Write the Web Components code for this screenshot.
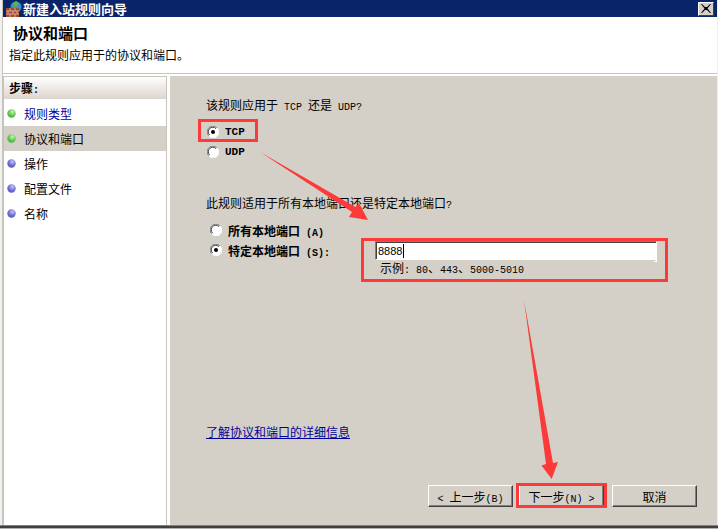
<!DOCTYPE html>
<html lang="zh">
<head>
<meta charset="utf-8">
<title>新建入站规则向导</title>
<style>
  html, body { margin: 0; padding: 0; height: 100%; overflow: hidden; background: #d4d0c8; }
  body { font: 12px "Noto Sans CJK SC", "Liberation Sans", sans-serif; color: #000; }
</style>
</head>
<body>
<wizard-window>
  <wizard-titlebar slot="title">新建入站规则向导</wizard-titlebar>
  <wizard-header slot="header" heading="协议和端口">指定此规则应用于的协议和端口。</wizard-header>
  <step-list slot="steps">
    <step-item state="done" link>规则类型</step-item>
    <step-item state="done" current>协议和端口</step-item>
    <step-item>操作</step-item>
    <step-item>配置文件</step-item>
    <step-item>名称</step-item>
  </step-list>
  <protocol-page slot="page"></protocol-page>
</wizard-window>

<script>
const UI_FONT = '"Noto Sans CJK SC", "Liberation Sans", sans-serif';
// latin text in the shot is 6px a character, Liberation Mono at 10px gives the same
const MONO = "10px 'Liberation Mono', monospace";

// outer frame: title, header and the two columns under it
class WizardWindow extends HTMLElement {
    constructor() {
        super();
        this.attachShadow({ mode: 'open' });
        this.shadowRoot.innerHTML = `
      <style>
        :host { display: block; width: 718px; height: 529px; box-sizing: border-box; padding: 0 1px 0 2px; background: #f0f0f0; }
        .frame { display: flex; flex-direction: column; height: 100%; border-left: 1px solid #c8c4bc; }
        .body { flex: 1; min-height: 0; display: grid; grid-template-columns: 164px 1fr; column-gap: 3px; padding-top: 2px; background: #fff; }
        .edge { height: 4px; margin-left: -3px; margin-right: -1px; background: linear-gradient(#808080 0 25%, #404040 25% 75%, #b0b0b0 75%); }
      </style>
      <div class="frame">
        <slot name="title"></slot>
        <slot name="header"></slot>
        <div class="body">
          <slot name="steps"></slot>
          <slot name="page"></slot>
        </div>
        <div class="edge"></div>
      </div>
    `;
    }
}

class WizardTitlebar extends HTMLElement {
    constructor() {
        super();
        this.attachShadow({ mode: 'open' });
        this.shadowRoot.innerHTML = `
      <style>
        :host { display: flex; align-items: center; height: 17px; padding-left: 3px; background: #0a246a; color: #fff; font: bold 13px ${UI_FONT}; }
        svg.logo { width: 16px; height: 16px; margin-right: 1px; flex: none; }
        .text { flex: 1; line-height: 17px; }
        .close { width: 16px; height: 14px; box-sizing: border-box; background: #d4d0c8; border: 1px solid; border-color: #fff #404040 #404040 #fff; display: flex; align-items: center; justify-content: center; margin-right: 3px; }
        .close svg { width: 10px; height: 9px; }
      </style>
      <svg class="logo" viewBox="0 0 16 16">
        <circle cx="10" cy="6" r="5.5" fill="#2f8fd8"/>
        <path d="M7 2l3-2 3 2-2 3-3 1z" fill="#58b83c"/>
        <rect x="0" y="7" width="13" height="9" fill="#a04a30"/>
        <path d="M0 10h13M0 13h13M4 7v3M9 7v3M2 10v3M7 10v3M11 10v3M4 13v3M9 13v3" stroke="#d8a890" stroke-width="1" fill="none"/>
      </svg>
      <span class="text"><slot></slot></span>
      <span class="close"><svg viewBox="0 0 10 9"><path d="M1 0l3 3h2l3-3h1L6.5 4.5 10 9H9L6 6H4L1 9H0l3.5-4.5L0 0z" fill="#000"/></svg></span>
    `;
    }
}

class WizardHeader extends HTMLElement {
    constructor() {
        super();
        this.attachShadow({ mode: 'open' });
        this.shadowRoot.innerHTML = `
      <style>
        :host { display: block; height: 57px; box-sizing: border-box; padding: 6px 0 0 6px; background: #fff; border-bottom: 1px solid #c8c4bc; }
        h1 { margin: 0 0 0 4px; font: bold 15px/19px ${UI_FONT}; }
        p { margin: 5px 0 0 0; font: 12px/16px ${UI_FONT}; }
      </style>
      <h1>${this.getAttribute('heading') || ''}</h1>
      <p><slot></slot></p>
    `;
    }
}

class StepList extends HTMLElement {
    constructor() {
        super();
        this.attachShadow({ mode: 'open' });
        this.shadowRoot.innerHTML = `
      <style>
        :host { display: block; background: #fff; border: 1px solid #c8c4bc; border-bottom: 0; box-sizing: border-box; }
        .label { height: 22px; padding-left: 5px; font: bold 12px/21px ${UI_FONT}; background: linear-gradient(#ffffff, #f2efec 35%, #dcd6d0); }
        .label span { font: bold ${MONO}; }
        .items { display: flex; flex-direction: column; padding-top: 2px; }
      </style>
      <div class="label">步骤<span>:</span></div>
      <div class="items"><slot></slot></div>
    `;
    }
}

class StepItem extends HTMLElement {
    constructor() {
        super();
        this.attachShadow({ mode: 'open' });
        const done = this.getAttribute('state') === 'done';
        const id = done ? 'g' : 'b';
        const stops = done
            ? '<stop offset="0" stop-color="#d0f0c8"/><stop offset=".55" stop-color="#5cc84c"/><stop offset="1" stop-color="#48a83c"/>'
            : '<stop offset="0" stop-color="#c8c8f0"/><stop offset=".55" stop-color="#6c6cd4"/><stop offset="1" stop-color="#5858b4"/>';
        this.shadowRoot.innerHTML = `
      <style>
        :host { display: flex; align-items: center; box-sizing: border-box; height: 25px; padding: 0 0 1px 3px; font: 12px ${UI_FONT}; color: #000; }
        :host([current]) { background: #d4d0c8; }
        :host([link]) { color: #00009c; }
        svg { width: 9px; height: 9px; margin-right: 8px; flex: none; }
      </style>
      <svg viewBox="0 0 9 9">
        <defs><radialGradient id="${id}" cx=".6" cy=".3" r=".8">${stops}</radialGradient></defs>
        <circle cx="4.5" cy="4.5" r="4.2" fill="url(#${id})"/>
      </svg>
      <span><slot></slot></span>
    `;
    }
}

class RadioOption extends HTMLElement {
    constructor() {
        super();
        this.attachShadow({ mode: 'open' });
        const dot = this.hasAttribute('checked') ? '<circle cx="6" cy="6" r="2" fill="#000"/>' : '';
        this.shadowRoot.innerHTML = `
      <style>
        :host { display: flex; align-items: center; gap: 6px; height: 20px; font: bold 12px ${UI_FONT}; }
        :host([mono]) { font: bold 11px "Liberation Mono", monospace; }
        svg { width: 12px; height: 12px; flex: none; }
      </style>
      <svg viewBox="0 0 12 12">
        <circle cx="6" cy="6" r="5.5" fill="#fff"/>
        <path d="M1.8 9.8A5.5 5.5 0 0 1 9.8 1.8" fill="none" stroke="#808080" stroke-width="1"/>
        <path d="M2.6 9A4.3 4.3 0 0 1 9 2.6" fill="none" stroke="#404040" stroke-width="1"/>
        <path d="M10.2 2.2A5.5 5.5 0 0 1 2.2 10.2" fill="none" stroke="#ffffff" stroke-width="1"/>
        ${dot}
      </svg>
      <span><slot></slot></span>
    `;
    }
}

class PortField extends HTMLElement {
    constructor() {
        super();
        this.attachShadow({ mode: 'open' });
        this.shadowRoot.innerHTML = `
      <style>
        :host { display: block; width: 282px; }
        .input { position: relative; height: 19px; box-sizing: border-box; background: #fff; border: 1px solid; border-color: #808080 #fff transparent #808080; box-shadow: inset 1px 1px 0 #404040; display: flex; align-items: center; padding-left: 2px; font: 11px/16px "Liberation Sans", sans-serif; }
        .input::after { content: ""; position: absolute; right: -1px; bottom: -3px; width: 3px; height: 3px; border-right: 1px solid #fff; border-bottom: 1px solid #fff; box-sizing: border-box; }
        .caret { width: 1px; height: 14px; background: #000; margin-left: 1px; }
        .hint { margin-left: 5px; font: 12px/15px ${UI_FONT}; }
      </style>
      <div class="input"><span>8888</span><span class="caret"></span></div>
      <div class="hint"><slot></slot></div>
    `;
    }
}

class WizardButton extends HTMLElement {
    constructor() {
        super();
        this.attachShadow({ mode: 'open' });
        this.shadowRoot.innerHTML = `
      <style>
        :host { display: flex; align-items: center; justify-content: center; box-sizing: border-box; width: 85px; height: 22px; background: #d4d0c8; border: 1px solid; border-color: #fff #404040 #404040 #fff; box-shadow: inset -1px -1px 0 #808080; font: 12px ${UI_FONT}; }
      </style>
      <span><slot></slot></span>
    `;
    }
}

// red marks laid over a screenshot: a box round a control
class RedBox extends HTMLElement {
    constructor() {
        super();
        this.attachShadow({ mode: 'open' });
        this.shadowRoot.innerHTML = `
      <style>
        :host { position: absolute; box-sizing: border-box; border: 3px solid #fb3a3a; pointer-events: none; }
      </style>
    `;
    }
}

class ProtocolPage extends HTMLElement {
    constructor() {
        super();
        this.attachShadow({ mode: 'open' });
        const m = (text, bold) => `<span style="font:${bold ? 'bold ' : ''}${MONO};white-space:pre">${text}</span>`;
        this.shadowRoot.innerHTML = `
      <style>
        :host { display: block; position: relative; background: #d4d0c8; font: 12px ${UI_FONT}; }
        .content { display: flex; flex-direction: column; height: 100%; box-sizing: border-box; padding: 21px 20px 18px 36px; }
        .q { line-height: 16px; }
        .tcp { margin: 9px 0 0 1px; }
        .scope { margin-top: 33px; }
        .ports { margin: 9px 0 0 4px; display: flex; }
        .ports .radios { width: 165px; }
        .ports port-field { margin-top: 21px; }
        .link { margin-top: auto; color: #00009c; text-decoration: underline; line-height: 16px; }
        .buttons { margin-top: 45px; display: flex; padding-left: 222px; }
        wizard-button:nth-child(2) { margin: 0 8px 0 6px; }
        .overlay { position: absolute; left: -170px; top: -76px; width: 718px; height: 529px; pointer-events: none; }
        red-box.a { left: 28px; top: 43px; width: 60px; height: 23px; }
        red-box.b { left: 191px; top: 162px; width: 307px; height: 44px; }
        red-box.c { left: 346px; top: 407px; width: 91px; height: 25px; }
      </style>
      <div class="content">
        <div class="q">该规则应用于${m(' TCP ')}还是${m(' UDP?')}</div>
        <div class="tcp">
          <radio-option mono checked>TCP</radio-option>
          <radio-option mono>UDP</radio-option>
        </div>
        <div class="scope q">此规则适用于所有本地端口还是特定本地端口${m('?')}</div>
        <div class="ports">
          <div class="radios">
            <radio-option>所有本地端口${m(' (A)', true)}</radio-option>
            <radio-option checked>特定本地端口${m(' (S):', true)}</radio-option>
          </div>
          <port-field>示例${m(': 80')}、${m('443')}、${m('5000-5010')}</port-field>
        </div>
        <div class="link">了解协议和端口的详细信息</div>
        <div class="buttons">
          <wizard-button>${m('&lt; ')}上一步${m('(B)')}</wizard-button>
          <wizard-button>下一步${m('(N) &gt;')}</wizard-button>
          <wizard-button>取消</wizard-button>
        </div>
      </div>
      <red-box class="a"></red-box>
      <red-box class="b"></red-box>
      <red-box class="c"></red-box>
      <svg class="overlay" viewBox="0 0 718 529">
        <path d="M260 152L352 212L349 217L368 220L359 203L355.5 207Z" fill="#fb3a3a"/>
        <path d="M524 300L546 464L541.5 465.5L551.7 479L558 462L553 463Z" fill="#fb3a3a"/>
      </svg>
    `;
    }
}

customElements.define('wizard-window', WizardWindow);
customElements.define('wizard-titlebar', WizardTitlebar);
customElements.define('wizard-header', WizardHeader);
customElements.define('step-list', StepList);
customElements.define('step-item', StepItem);
customElements.define('radio-option', RadioOption);
customElements.define('port-field', PortField);
customElements.define('wizard-button', WizardButton);
customElements.define('red-box', RedBox);
customElements.define('protocol-page', ProtocolPage);
</script>
</body>
</html>
